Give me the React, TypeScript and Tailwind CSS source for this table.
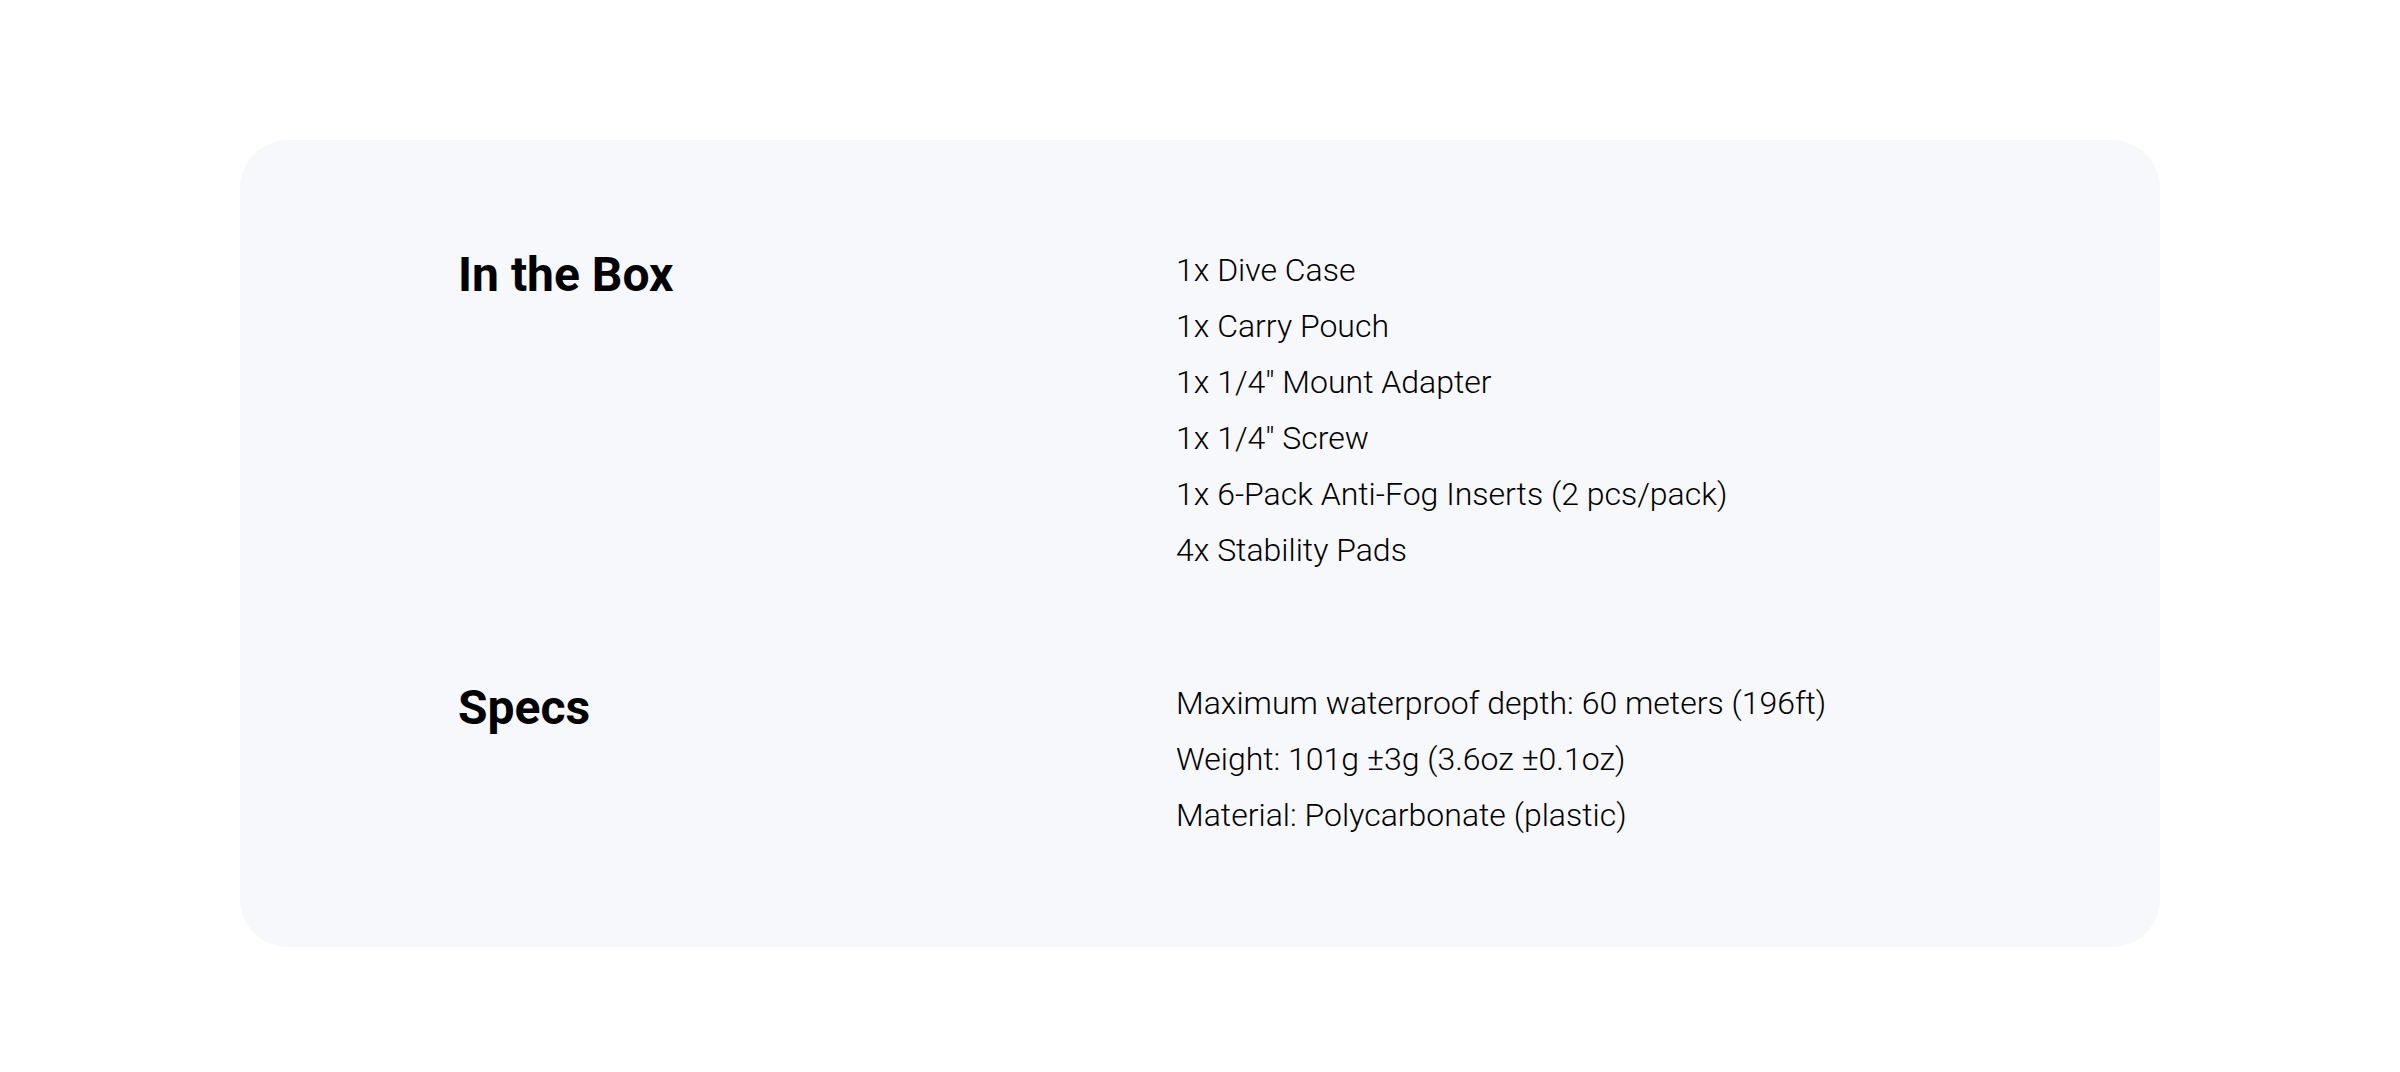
export default function App() {
  const box = [
    "1x Dive Case",
    "1x Carry Pouch",
    '1x 1/4" Mount Adapter',
    '1x 1/4" Screw',
    "1x 6-Pack Anti-Fog Inserts (2 pcs/pack)",
    "4x Stability Pads",
  ];
  const specs = [
    "Maximum waterproof depth: 60 meters (196ft)",
    "Weight: 101g ±3g (3.6oz ±0.1oz)",
    "Material: Polycarbonate (plastic)",
  ];
  const Section = ({ title, items }: { title: string; items: string[] }) => (
    <div className="grid grid-cols-[718px_1fr] items-start">
      <h2 className="mt-[5px] text-[48px] leading-[56px] font-bold text-black">{title}</h2>
      <ul className="flex flex-col">
        {items.map((t) => (
          <li key={t} className="text-[32px] leading-[56px] font-light text-black">
            {t}
          </li>
        ))}
      </ul>
    </div>
  );
  return (
    <div className="min-h-screen bg-white px-[240px] pt-[140px] pb-[100px]" style={{ fontFamily: "Roboto, 'Noto Sans', sans-serif" }}>
      <div className="bg-[#f7f8fc] rounded-[48px] pl-[218px] pr-[200px] pt-[102px] pb-[104px] flex flex-col gap-[97px]">
        <Section title="In the Box" items={box} />
        <Section title="Specs" items={specs} />
      </div>
    </div>
  );
}
